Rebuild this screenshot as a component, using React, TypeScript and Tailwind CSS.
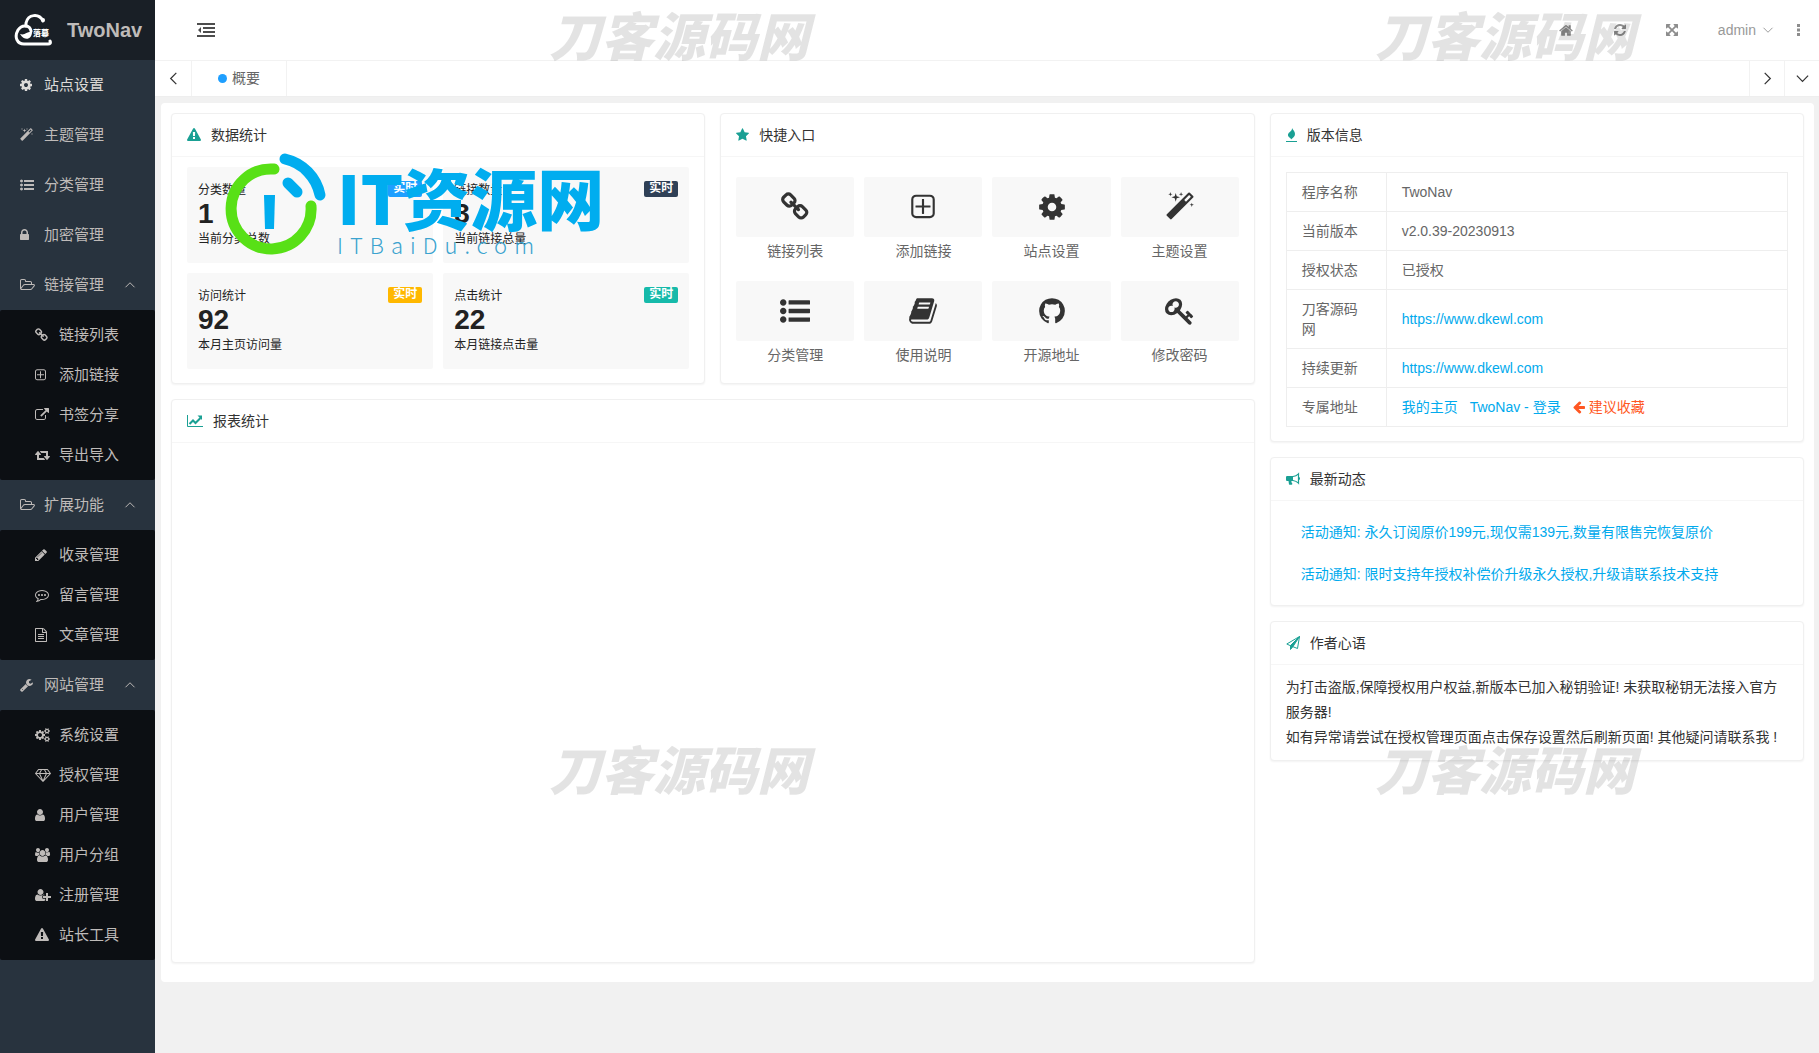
import React from "react";

type Glyph = { d: string; x: number; w: number };

const G: Record<string, Glyph> = {
  cog: { x: 128, w: 1536, d: "M1152 896q0-106-75-181t-181-75-181 75-75 181 75 181 181 75 181-75 75-181zm512-109v222q0 12-8 23t-20 13l-185 28q-19 54-39 91 35 50 107 138 10 12 10 25t-9 23q-27 37-99 108t-94 71q-12 0-26-9l-138-108q-44 23-91 38-16 136-29 186-7 28-36 28h-222q-14 0-24.5-8.5t-11.5-21.5l-28-184q-49-16-90-37l-141 107q-10 9-25 9-14 0-25-11-126-114-165-168-7-10-7-23 0-12 8-23 15-21 51-66.5t54-70.5q-27-50-41-99l-183-27q-13-2-21-12.5t-8-23.5v-222q0-12 8-23t19-13l186-28q14-46 39-92-40-57-107-138-10-12-10-24 0-10 9-23 26-36 98.5-107.5t94.5-71.5q13 0 26 10l138 107q44-23 91-38 16-136 29-186 7-28 36-28h222q14 0 24.5 8.5t11.5 21.5l28 184q49 16 90 37l142-107q9-9 24-9 13 0 25 10 129 119 165 170 7 8 7 22 0 12-8 23-15 21-51 66.5t-54 70.5q26 50 41 98l183 28q13 2 21 12.5t8 23.5z" },
  magic: { x: 64, w: 1664, d: "M1254 581l293-293-107-107-293 293zm447-293q0 27-18 45l-1286 1286q-18 18-45 18t-45-18l-198-198q-18-18-18-45t18-45l1286-1286q18-18 45-18t45 18l198 198q18 18 18 45zm-1351-190l98 30-98 30-30 98-30-98-98-30 98-30 30-98zm350 162l196 60-196 60-60 196-60-196-196-60 196-60 60-196zm930 478l98 30-98 30-30 98-30-98-98-30 98-30 30-98zm-640-640l98 30-98 30-30 98-30-98-98-30 98-30 30-98z" },
  list: { x: 0, w: 1792, d: "M384 1408q0 80-56 136t-136 56-136-56-56-136 56-136 136-56 136 56 56 136zm0-512q0 80-56 136t-136 56-136-56-56-136 56-136 136-56 136 56 56 136zm1408 416v192q0 13-9.5 22.5t-22.5 9.5h-1216q-13 0-22.5-9.5t-9.5-22.5v-192q0-13 9.5-22.5t22.5-9.5h1216q13 0 22.5 9.5t9.5 22.5zm-1408-928q0 80-56 136t-136 56-136-56-56-136 56-136 136-56 136 56 56 136zm1408 416v192q0 13-9.5 22.5t-22.5 9.5h-1216q-13 0-22.5-9.5t-9.5-22.5v-192q0-13 9.5-22.5t22.5-9.5h1216q13 0 22.5 9.5t9.5 22.5zm0-512v192q0 13-9.5 22.5t-22.5 9.5h-1216q-13 0-22.5-9.5t-9.5-22.5v-192q0-13 9.5-22.5t22.5-9.5h1216q13 0 22.5 9.5t9.5 22.5z" },
  lock: { x: 320, w: 1152, d: "M640 768h512v-192q0-106-75-181t-181-75-181 75-75 181v192zm832 96v576q0 40-28 68t-68 28h-960q-40 0-68-28t-28-68v-576q0-40 28-68t68-28h32v-192q0-184 132-316t316-132 316 132 132 316v192h32q40 0 68 28t28 68z" },
  folder: { x: -64, w: 1920, d: "M1717 931q0-35-53-35h-1088q-40 0-85.5 21.5t-71.5 52.5l-294 363q-18 24-18 40 0 35 53 35h1088q40 0 86-22t71-53l294-363q18-22 18-39zm-1141-163h768v-160q0-40-28-68t-68-28h-576q-40 0-68-28t-28-68v-64q0-40-28-68t-68-28h-320q-40 0-68 28t-28 68v853l256-315q44-53 116-87.5t140-34.5zm1269 163q0 62-46 120l-295 363q-43 53-116 87.5t-140 34.5h-1088q-92 0-158-66t-66-158v-960q0-92 66-158t158-66h320q92 0 158 66t66 158v32h544q92 0 158 66t66 158v160h192q54 0 99 24.5t67 70.5q15 32 15 68z" },
  chain: { x: 80, w: 1664, d: "M1520 1216q0-40-28-68l-208-208q-28-28-68-28-42 0-72 32 3 3 19 18.5t21.5 21.5 15 19 13 25.5 3.5 27.5q0 40-28 68t-68 28q-15 0-27.5-3.5t-25.5-13-19-15-21.5-21.5-18.5-19q-33 31-33 73 0 40 28 68l206 207q27 27 68 27 40 0 68-26l147-146q28-28 28-67zm-703-705q0-40-28-68l-206-207q-28-28-68-28-39 0-68 27l-147 146q-28 28-28 67 0 40 28 68l208 208q27 27 68 27 42 0 72-31-3-3-19-18.5t-21.5-21.5-15-19-13-25.5-3.5-27.5q0-40 28-68t68-28q15 0 27.5 3.5t25.5 13 19 15 21.5 21.5 18.5 19q33-31 33-73zm895 705q0 120-85 203l-147 146q-83 83-203 83-121 0-204-85l-206-207q-83-83-83-203 0-123 88-209l-88-88q-86 88-208 88-120 0-204-84l-208-208q-84-84-84-204t85-203l147-146q83-83 203-83 121 0 204 85l206 207q83 83 83 203 0 123-88 209l88 88q86-88 208-88 120 0 204 84l208 208q84 84 84 204z" },
  plus: { x: 192, w: 1408, d: "M1344 832v64q0 14-9 23t-23 9h-352v352q0 14-9 23t-23 9h-64q-14 0-23-9t-9-23v-352h-352q-14 0-23-9t-9-23v-64q0-14 9-23t23-9h352v-352q0-14 9-23t23-9h64q14 0 23 9t9 23v352h352q14 0 23 9t9 23zm128 448v-832q0-66-47-113t-113-47h-832q-66 0-113 47t-47 113v832q0 66 47 113t113 47h832q66 0 113-47t47-113zm128-832v832q0 119-84.5 203.5t-203.5 84.5h-832q-119 0-203.5-84.5t-84.5-203.5v-832q0-119 84.5-203.5t203.5-84.5h832q119 0 203.5 84.5t84.5 203.5z" },
  share: { x: 0, w: 1792, d: "M1408 928v320q0 119-84.5 203.5t-203.5 84.5h-832q-119 0-203.5-84.5t-84.5-203.5v-832q0-119 84.5-203.5t203.5-84.5h704q14 0 23 9t9 23v64q0 14-9 23t-23 9h-704q-66 0-113 47t-47 113v832q0 66 47 113t113 47h832q66 0 113-47t47-113v-320q0-14 9-23t23-9h64q14 0 23 9t9 23zm384-864v512q0 26-19 45t-45 19-45-19l-176-176-652 652q-10 10-23 10t-23-10l-114-114q-10-10-10-23t10-23l652-652-176-176q-19-19-19-45t19-45 45-19h512q26 0 45 19t19 45z" },
  retweet: { x: 0, w: 1920, d: "M1280 1504q0 13-9.5 22.5t-22.5 9.5h-960q-8 0-13.5-2t-9-7-5.5-8-3-11.5-1-11.5v-600h-192q-26 0-45-19t-19-45q0-24 15-41l320-384q19-22 49-22t49 22l320 384q15 17 15 41 0 26-19 45t-45 19h-192v384h576q16 0 25 11l160 192q7 10 7 21zm640-416q0 24-15 41l-320 384q-20 23-49 23t-49-23l-320-384q-15-17-15-41 0-26 19-45t45-19h192v-384h-576q-16 0-25-12l-160-192q-7-9-7-20 0-13 9.5-22.5t22.5-9.5h960q8 0 13.5 2t9 7 5.5 8 3 11.5 1 11.5v600h192q26 0 45 19t19 45z" },
  pencil: { x: 128, w: 1536, d: "M491 1536l91-91-235-235-91 91v107h128v128h107zm523-928q0-22-22-22-10 0-17 7l-542 542q-7 7-7 17 0 22 22 22 10 0 17-7l542-542q7-7 7-17zm-54-192l416 416-832 832h-416v-416zm683 96q0 53-37 90l-166 166-416-416 166-165q36-38 90-38 53 0 91 38l235 234q37 39 37 91z" },
  comment: { x: 0, w: 1792, d: "M640 896q0 53-37.5 90.5t-90.5 37.5-90.5-37.5-37.5-90.5 37.5-90.5 90.5-37.5 90.5 37.5 37.5 90.5zm384 0q0 53-37.5 90.5t-90.5 37.5-90.5-37.5-37.5-90.5 37.5-90.5 90.5-37.5 90.5 37.5 37.5 90.5zm384 0q0 53-37.5 90.5t-90.5 37.5-90.5-37.5-37.5-90.5 37.5-90.5 90.5-37.5 90.5 37.5 37.5 90.5zm-512-512q-204 0-381.5 69.5t-282 187.5-104.5 255q0 112 71.5 213.5t201.5 175.5l87 50-27 96q-24 91-70 172 152-63 275-171l43-38 57 6q69 8 130 8 204 0 381.5-69.5t282-187.5 104.5-255-104.5-255-282-187.5-381.5-69.5zm896 512q0 174-120 321.5t-326 233-450 85.5q-70 0-145-8-198 175-460 242-49 14-114 22h-5q-15 0-27-10.5t-16-27.5v-1q-3-4-.5-12t2-10 4.5-9.5l6-9 7-8.5 8-9q7-8 31-34.5t34.5-38 31-39.5 32.5-51 27-59 26-76q-157-89-247.5-220t-90.5-281q0-174 120-321.5t326-233 450-85.5 450 85.5 326 233 120 321.5z" },
  file: { x: 128, w: 1536, d: "M1596 380q28 28 48 76t20 88v1152q0 40-28 68t-68 28h-1344q-40 0-68-28t-28-68v-1600q0-40 28-68t68-28h896q40 0 88 20t76 48zm-444-244v376h376q-10-29-22-41l-313-313q-12-12-41-22zm384 1528v-1024h-416q-40 0-68-28t-28-68v-416h-768v1536h1280zm-1024-864q0-14 9-23t23-9h704q14 0 23 9t9 23v64q0 14-9 23t-23 9h-704q-14 0-23-9t-9-23v-64zm736 224q14 0 23 9t9 23v64q0 14-9 23t-23 9h-704q-14 0-23-9t-9-23v-64q0-14 9-23t23-9h704zm0 256q14 0 23 9t9 23v64q0 14-9 23t-23 9h-704q-14 0-23-9t-9-23v-64q0-14 9-23t23-9h704z" },
  wrench: { x: 64, w: 1664, d: "M448 1472q0-26-19-45t-45-19-45 19-19 45 19 45 45 19 45-19 19-45zm644-420l-682 682q-37 37-90 37-52 0-91-37l-106-108q-38-36-38-90 0-53 38-91l681-681q39 98 114.5 173.5t173.5 114.5zm634-435q0 39-23 106-47 134-164.5 217.5t-258.5 83.5q-185 0-316.5-131.5t-131.5-316.5 131.5-316.5 316.5-131.5q58 0 121.5 16.5t107.5 46.5q16 11 16 28t-16 28l-293 169v224l193 107q5-3 79-48.5t135.5-81 70.5-35.5q15 0 23.5 10t8.5 25z" },
  cogs: { x: 0, w: 1920, d: "M896 896q0-106-75-181t-181-75-181 75-75 181 75 181 181 75 181-75 75-181zm768 512q0-52-38-90t-90-38-90 38-38 90q0 53 37.500 90.500t90.500 37.500 90.500-37.500 37.500-90.500zm0-1024q0-52-38-90t-90-38-90 38-38 90q0 53 37.500 90.500t90.500 37.500 90.500-37.500 37.500-90.500zm-384 421v185q0 10-7 19.500t-16 10.500l-155 24q-11 35-32 76 34 48 90 115 7 11 7 20 0 12-7 19-23 30-82.500 89.500t-78.500 59.500q-11 0-21-7l-115-90q-37 19-77 31-11 108-23 155-7 24-30 24h-186q-11 0-20-7.500t-10-17.500l-23-153q-34-10-75-31l-118 89q-7 7-20 7-11 0-21-8-144-133-144-160 0-9 7-19 10-14 41-53t47-61q-23-44-35-82l-152-24q-10-1-17-9.500t-7-19.500v-185q0-10 7-19.500t16-10.500l155-24q11-35 32-76-34-48-90-115-7-11-7-20 0-12 7-20 22-30 82-89t79-59q11 0 21 7l115 90q34-18 77-32 11-108 23-154 7-24 30-24h186q11 0 20 7.500t10 17.500l23 153q34 10 75 31l118-89q8-7 20-7 11 0 21 8 144 133 144 160 0 8-7 19-12 16-42 54t-45 60q23 48 34 82l152 23q10 2 17 10.500t7 19.500zm640 533v140q0 16-149 31-12 27-30 52 51 113 51 138 0 4-4 7-122 71-124 71-8 0-46-47t-52-68q-20 2-30 2t-30-2q-14 21-52 68t-46 47q-2 0-124-71-4-3-4-7 0-25 51-138-18-25-30-52-149-15-149-31v-140q0-16 149-31 13-29 30-52-51-113-51-138 0-4 4-7 4-2 35-20t59-34 30-16q8 0 46 46.500t52 67.500q20-2 30-2t30 2q51-71 92-112l6-2q4 0 124 70 4 3 4 7 0 25-51 138 17 23 30 52 149 15 149 31zm0-1024v140q0 16-149 31-12 27-30 52 51 113 51 138 0 4-4 7-122 71-124 71-8 0-46-47t-52-68q-20 2-30 2t-30-2q-14 21-52 68t-46 47q-2 0-124-71-4-3-4-7 0-25 51-138-18-25-30-52-149-15-149-31v-140q0-16 149-31 13-29 30-52-51-113-51-138 0-4 4-7 4-2 35-20t59-34 30-16q8 0 46 46.500t52 67.500q20-2 30-2t30 2q51-71 92-112l6-2q4 0 124 70 4 3 4 7 0 25-51 138 17 23 30 52 149 15 149 31z" },
  diamond: { x: 0, w: 2048, d: "M212 768l623 665-300-665h-323zm812 772l349-772h-698zm-486-900l204-384h-262l-288 384h346zm675 793l623-665h-323zm-530-793h682l-204-384h-274zm827 0h346l-288-384h-262zm141-486l384 512q14 18 13 41.500t-17 40.500l-960 1024q-18 20-47 20t-47-20l-960-1024q-16-17-17-40.500t13-41.500l384-512q18-26 51-26h1152q33 0 51 26z" },
  user: { x: 256, w: 1280, d: "M1536 1399q0 109-62.500 187t-150.500 78h-854q-88 0-150.500-78t-62.500-187q0-85 8.500-160.500t31.500-152 58.500-131 94-89 134.500-34.500q131 128 313 128t313-128q76 0 134.500 34.500t94 89 58.500 131 31.500 152 8.500 160.500zm-256-887q0 159-112.500 271.500t-271.500 112.500-271.500-112.500-112.500-271.500 112.500-271.500 271.500-112.500 271.500 112.500 112.500 271.500z" },
  users: { x: 64, w: 1920, d: "M657 896q-162 5-265 128h-134q-82 0-138-40.500t-56-118.500q0-353 124-353 6 0 43.500 21t97.500 42.500 119 21.500q67 0 133-23-5 37-5 66 0 159 93 294zm1071 637q0 120-73 189.500t-194 69.500h-874q-121 0-194-69.500t-73-189.500q0-53 3.500-103.500t14-109 26.500-108.500 43-97.500 62-81 85.500-53.500 111.500-20q10 0 43 21.500t73 48 107 48 135 21.500 135-21.500 107-48 73-48 43-21.500q61 0 111.500 20t85.500 53.500 62 81 43 97.500 26.500 108.500 14 109 3.500 103.500zm-1024-1277q0 106-75 181t-181 75-181-75-75-181 75-181 181-75 181 75 75 181zm704 384q0 159-112.500 271.500t-271.500 112.500-271.500-112.500-112.500-271.500 112.500-271.500 271.500-112.500 271.500 112.500 112.500 271.500zm576 225q0 78-56 118.500t-138 40.500h-134q-103-123-265-128 93-135 93-294 0-29-5-66 66 23 133 23 59 0 119-21.500t97.500-42.500 43.500-21q124 0 124 353zm-128-609q0 106-75 181t-181 75-181-75-75-181 75-181 181-75 181 75 75 181z" },
  userPlus: { x: 0, w: 2048, d: "M704 896q-159 0-271.500-112.500t-112.500-271.500 112.500-271.500 271.500-112.500 271.500 112.500 112.500 271.500-112.500 271.500-271.500 112.500zm960 128h352q13 0 22.500 9.500t9.500 22.500v192q0 13-9.500 22.500t-22.500 9.500h-352v352q0 13-9.500 22.500t-22.500 9.500h-192q-13 0-22.500-9.500t-9.500-22.500v-352h-352q-13 0-22.500-9.500t-9.500-22.500v-192q0-13 9.500-22.500t22.500-9.500h352v-352q0-13 9.500-22.500t22.500-9.500h192q13 0 22.500 9.500t9.500 22.500v352zm-736 224q0 52 38 90t90 38h256v238q-68 50-171 50h-874q-121 0-194-69t-73-190q0-53 3.500-103.500t14-109 26.500-108.500 43-97.500 62-81 85.500-53.500 111.500-20q19 0 39 17 79 61 154.500 91.500t164.500 30.500 164.500-30.500 154.500-91.500q20-17 39-17 132 0 217 96h-223q-52 0-90 38t-38 90v192z" },
  warning: { x: 0, w: 1792, d: "M1024 1375v-190q0-14-9.500-23.500t-22.500-9.500h-192q-13 0-22.500 9.500t-9.500 23.500v190q0 14 9.500 23.500t22.500 9.500h192q13 0 22.500-9.500t9.500-23.500zm-2-374l18-459q0-12-10-19-13-11-24-11h-220q-11 0-24 11-10 7-10 21l17 457q0 10 10 16.500t24 6.500h185q14 0 23.500-6.500t10.500-16.500zm-14-934l768 1408q35 63-2 126-17 29-46.500 46t-63.500 17h-1536q-34 0-63.500-17t-46.500-46q-37-63-2-126l768-1408q17-31 47-49t65-18 65 18 47 49z" },
  star: { x: 64, w: 1664, d: "M1728 647q0 22-26 48l-363 354 86 500q1 7 1 20 0 21-10.500 35.500t-30.500 14.500q-19 0-40-12l-449-236-449 236q-22 12-40 12-21 0-31.500-14.500t-10.500-35.500q0-6 2-20l86-500-364-354q-25-27-25-48 0-37 56-46l502-73 225-455q19-41 49-41t49 41l225 455 502 73q56 9 56 46z" },
  book: { x: 64, w: 1664, d: "M1703 478q40 57 18 129l-275 906q-19 64-76.500 107.500t-122.500 43.500h-923q-77 0-148.500-53.500t-99.500-131.500q-24-67-2-127 0-4 3-27t4-37q1-8-3-21.500t-3-19.500q2-11 8-21t16.500-23.500 16.500-23.500q23-38 45-91.500t30-91.500q3-10 .5-30t-.5-28q3-11 17-28t17-23q21-36 42-92t25-90q1-9-2.500-32t.5-28q4-13 22-30.500t22-22.500q19-26 42.500-84.500t27.500-96.500q1-8-3-25.500t-2-26.500q2-8 9-18t18-23 17-21q8-12 16.500-30.500t15-35 16-36 19.500-32 26.500-23.500 36-11.500 47.500 5.500l-1 3q38-9 51-9h761q74 0 114 56t18 130l-274 906q-36 119-71.500 153.500t-128.500 34.500h-869q-27 0-38 15-11 16-1 43 24 70 144 70h923q29 0 56-15.500t35-41.500l300-987q7-22 5-57 38 15 59 43zm-1064 2q-4 13 2 22.500t20 9.500h608q13 0 25.500-9.500t16.500-22.500l21-64q4-13-2-22.500t-20-9.500h-608q-13 0-25.500 9.500t-16.500 22.500zm-83 256q-4 13 2 22.500t20 9.500h608q13 0 25.500-9.500t16.500-22.500l21-64q4-13-2-22.500t-20-9.500h-608q-13 0-25.500 9.500t-16.500 22.500z" },
  github: { x: 128, w: 1536, d: "M896 128q209 0 385.500 103t279.500 279.500 103 385.500q0 251-146.500 451.500t-378.500 277.500q-27 5-40-7t-13-30q0-3 .5-76.500t.5-134.500q0-97-52-142 57-6 102.500-18t94-39 81-66.500 53-105 20.500-150.500q0-119-79-206 37-91-8-204-28-9-81 11t-92 44l-38 24q-93-26-192-26t-192 26q-16-11-42.500-27t-83.500-38.500-85-13.500q-45 113-8 204-79 87-79 206 0 85 20.500 150t52.500 105 80.500 67 94 39 102.500 18q-39 36-49 103-21 10-45 15t-57 5-65.500-21.500-55.500-62.500q-19-32-48.500-52t-49.500-24l-20-3q-21 0-29 4.500t-5 11.500 9 14 13 12l7 5q22 10 43.500 38t31.500 51l10 23q13 38 44 61.500t67 30 69.500 7 55.500-3.500l23-4q0 38 .5 88.500t.5 54.500q0 18-13 30t-40 7q-232-77-378.500-277.500t-146.500-451.500q0-209 103-385.500t279.500-279.500 385.500-103z" },
  key: { x: 64, w: 1664, d: "M832 512q0-80-56-136t-136-56-136 56-56 136q0 42 19 83-41-19-83-19-80 0-136 56t-56 136 56 136 136 56 136-56 56-136q0-42-19-83 41 19 83 19 80 0 136-56t56-136zm851 704q0 17-49 66t-66 49q-9 0-28.500-16t-36.500-33-38.500-40-24.500-26l-96 96 220 220q28 28 28 68 0 42-39 81t-81 39q-40 0-68-28l-671-671q-176 131-365 131-163 0-265.500-102.500t-102.500-265.500q0-160 95-313t248-248 313-95q163 0 265.500 102.500t102.500 265.500q0 189-131 365l355 355 96-96q-3-3-26-24.500t-40-38.500-33-36.500-16-28.500q0-17 49-66t66-49q13 0 23 10 6 6 46 44.500t82 79.500 86.500 86 73 78 28.500 41z" },
  arrowLeft: { x: 128, w: 1536, d: "M1664 896v128q0 53-32.500 90.500t-84.500 37.500h-704l293 294q38 36 38 90t-38 90l-75 76q-37 37-90 37-52 0-91-37l-651-652q-37-37-37-90 0-52 37-91l651-650q38-38 91-38 52 0 90 38l75 74q38 38 38 91t-38 91l-293 293h704q52 0 84.500 37.500t32.500 90.500z" },
  home: { x: 64, w: 1664, d: "M1472 992v480q0 26-19 45t-45 19h-384v-384h-256v384h-384q-26 0-45-19t-19-45v-480q0-1 .5-3t.5-3l575-474 575 474q1 2 1 6zm223-69l-62 74q-8 9-21 11h-3q-13 0-21-7l-692-577-692 577q-12 8-24 7-13-2-21-11l-62-74q-8-10-7-23.500t11-21.500l719-599q32-26 76-26t76 26l244 204v-195q0-14 9-23t23-9h192q14 0 23 9t9 23v408l219 182q10 8 11 21.500t-7 23.500z" },
  refresh: { x: 128, w: 1536, d: "M1639 1056q0 5-1 7-64 268-268 434.500t-478 166.500q-146 0-282.500-55t-243.500-157l-129 129q-19 19-45 19t-45-19-19-45v-448q0-26 19-45t45-19h448q26 0 45 19t19 45-19 45l-137 137q71 66 161 102t187 36q134 0 250-65t186-179q11-17 53-117 8-23 30-23h192q13 0 22.500 9.500t9.500 22.500zm25-800v448q0 26-19 45t-45 19h-448q-26 0-45-19t-19-45 19-45l138-138q-148-137-349-137-134 0-250 65t-186 179q-11 17-53 117-8 23-30 23h-199q-13 0-22.500-9.500t-9.500-22.500v-7q65-268 270-434.500t480-166.500q146 0 284 55.500t245 156.500l130-129q19-19 45-19t45 19 19 45z" },
  expand: { x: 128, w: 1536, d: "M1411 541l-355 355 355 355 144-144q29-31 70-14 39 17 39 59v448q0 26-19 45t-45 19h-448q-42 0-59-40-17-39 14-69l144-144-355-355-355 355 144 144q31 30 14 69-17 40-59 40h-448q-26 0-45-19t-19-45v-448q0-42 40-59 39-17 69 14l144 144 355-355-355-355-144 144q-19 19-45 19-12 0-24-5-40-17-40-59v-448q0-26 19-45t45-19h448q42 0 59 40 17 39-14 69l-144 144 355 355 355-355-144-144q-31-30-14-69 17-40 59-40h448q26 0 45 19t19 45v448q0 42-39 59-13 5-25 5-26 0-45-19z" },
};

function Icon({ name, className, center }: { name: string; className: string; center?: boolean }) {
  const g = G[name];
  return (
    <svg
      aria-hidden="true"
      className={className}
      viewBox={`${g.x} 0 ${g.w} 1792`}
      preserveAspectRatio={center ? "xMidYMid meet" : "xMinYMid meet"}
      fill="currentColor"
      overflow="visible"
    >
      <path d={g.d} />
    </svg>
  );
}

function Chevron({ dir, className }: { dir: "up" | "down" | "left" | "right"; className: string }) {
  const d = { up: "M2 11l6-6 6 6", down: "M2 5l6 6 6-6", left: "M11 2L5 8l6 6", right: "M5 2l6 6-6 6" }[dir];
  return (
    <svg aria-hidden="true" viewBox="0 0 16 16" className={className} fill="none" stroke="currentColor" strokeWidth="1.300">
      <path d={d} />
    </svg>
  );
}

function CloudLogo() {
  return (
    <svg aria-hidden="true" viewBox="0 0 40 34" className="h-[34px] w-[40px] shrink-0">
      <g fill="none" stroke="#fff" strokeWidth="3" strokeLinecap="round" strokeLinejoin="round">
        <path d="M29 8C25 0 14 1 12 10C12 11 12 12 12 13" />
        <path d="M17 18C16 12 8 11 4 17C0 24 3 31 10 31H34C36 31 37 30 36 28" />
      </g>
      <circle cx="29" cy="7" r="2" fill="#fff" />
      <path d="M6 21C11 23 13 18 18 19C18 26 11 29 6 21Z" fill="#fff" />
      <text x="19" y="23" fontSize="8" fontWeight="900" fill="#fff" fontFamily="'Noto Sans CJK SC', sans-serif">落幕</text>
    </svg>
  );
}

type Item = { icon: string; label: string; children?: Item[] };

const menu: Item[] = [
  { icon: "cog", label: "站点设置" },
  { icon: "magic", label: "主题管理" },
  { icon: "list", label: "分类管理" },
  { icon: "lock", label: "加密管理" },
  {
    icon: "folder", label: "链接管理", children: [
      { icon: "chain", label: "链接列表" },
      { icon: "plus", label: "添加链接" },
      { icon: "share", label: "书签分享" },
      { icon: "retweet", label: "导出导入" },
    ],
  },
  {
    icon: "folder", label: "扩展功能", children: [
      { icon: "pencil", label: "收录管理" },
      { icon: "comment", label: "留言管理" },
      { icon: "file", label: "文章管理" },
    ],
  },
  {
    icon: "wrench", label: "网站管理", children: [
      { icon: "cogs", label: "系统设置" },
      { icon: "diamond", label: "授权管理" },
      { icon: "user", label: "用户管理" },
      { icon: "users", label: "用户分组" },
      { icon: "userPlus", label: "注册管理" },
      { icon: "warning", label: "站长工具" },
    ],
  },
];

function Sidebar() {
  return (
    <aside className="w-[155px] shrink-0 bg-[#28333e] text-[15px] text-[#bfbbb9]">
      <a href="#" className="flex h-[60px] items-center bg-[#191f26] pl-[14px]">
        <CloudLogo />
        <span className="ml-[13px] text-[20px] font-bold">TwoNav</span>
      </a>
      <nav>
        <ul>
          {menu.map((m, i) => (
            <li key={m.label}>
              <a href="#" className={i === 0 ? "flex h-[50px] items-center pl-5 text-[#dcdad8]" : "flex h-[50px] items-center pl-5"}>
                <Icon name={m.icon} className="mr-[6px] h-[14px] w-[18px]" />
                <span>{m.label}</span>
                {m.children && <Chevron dir="up" className="ml-5 h-3 w-3" />}
              </a>
              {m.children && (
                <ul className="rounded-xs bg-[#0c0f13] py-[5px]">
                  {m.children.map((c) => (
                    <li key={c.label}>
                      <a href="#" className="flex h-10 items-center pl-[35px]">
                        <Icon name={c.icon} className="mr-[6px] h-[14px] w-[18px]" />
                        <span>{c.label}</span>
                      </a>
                    </li>
                  ))}
                </ul>
              )}
            </li>
          ))}
        </ul>
      </nav>
    </aside>
  );
}

function Header() {
  return (
    <header className="flex h-[61px] items-center border-b border-[#f2f2f2] bg-white text-[#8d8d8d]">
      <button type="button" aria-label="收起菜单" className="ml-[42px] text-[#4d4d4d]">
        <svg viewBox="0 0 18 14" className="h-[14px] w-[18px]" fill="currentColor" aria-hidden="true">
          <path d="M0 0H18V2H0zM6 4H18V6H6zM6 8H18V10H6zM0 12H18V14H0zM4 4V10L1 7z" />
        </svg>
      </button>
      <div className="ml-auto flex items-center">
        <button type="button" aria-label="主页" className="mr-[41px]"><Icon name="home" center className="h-[15px] w-[14px]" /></button>
        <button type="button" aria-label="刷新" className="mr-[40px]"><Icon name="refresh" center className="h-[14px] w-[12px]" /></button>
        <button type="button" aria-label="全屏" className="mr-[40px]"><Icon name="expand" center className="h-[14px] w-[12px]" /></button>
        <button type="button" className="flex items-center text-[14px] text-[#999]">
          admin
          <Chevron dir="down" className="ml-[6px] h-3 w-3" />
        </button>
        <button type="button" aria-label="更多" className="mr-[19px] ml-[23px]">
          <svg viewBox="0 0 3 12" className="h-[12px] w-[3px]" fill="currentColor" aria-hidden="true">
            <path d="M0 0h3v3H0zM0 4.500h3v3H0zM0 9h3v3H0z" />
          </svg>
        </button>
      </div>
    </header>
  );
}

function TabBar() {
  return (
    <div className="flex h-9 items-stretch border-b border-[#eee] bg-white text-[#333]">
      <button type="button" aria-label="向左" className="flex w-[37px] items-center justify-center border-r border-[#f2f2f2]">
        <Chevron dir="left" className="h-[15px] w-[15px]" />
      </button>
      <button type="button" className="flex w-[95px] items-center justify-center gap-[5px] border-r border-[#f2f2f2] text-[14px] text-[#666]">
        <span className="h-[9px] w-[9px] rounded-full bg-[#1e9fff]" />
        概要
      </button>
      <button type="button" aria-label="向右" className="ml-auto flex w-[35px] items-center justify-center border-l border-[#f2f2f2]">
        <Chevron dir="right" className="h-[15px] w-[15px]" />
      </button>
      <button type="button" aria-label="标签操作" className="flex w-[35px] items-center justify-center border-l border-[#f2f2f2]">
        <Chevron dir="down" className="h-[15px] w-[15px]" />
      </button>
    </div>
  );
}

function Card({ icon, title, children, className = "" }: { icon: React.ReactNode; title: string; children?: React.ReactNode; className?: string }) {
  return (
    <section className={`rounded-[4px] border border-[#f0f0f0] bg-white shadow-[0_1px_2px_rgba(0,0,0,0.05)] ${className}`}>
      <h2 className="flex h-[43px] items-center gap-[10px] border-b border-[#f6f6f6] px-[15px] text-[14px] text-[#333]">
        <span className="text-[#1aa094]">{icon}</span>
        {title}
      </h2>
      {children}
    </section>
  );
}

const stats = [
  { label: "分类数量", value: "1", note: "当前分类总数", badge: "bg-[#1e9fff]" },
  { label: "链接数量", value: "3", note: "当前链接总量", badge: "bg-[#2f4056]" },
  { label: "访问统计", value: "92", note: "本月主页访问量", badge: "bg-[#ffb800]" },
  { label: "点击统计", value: "22", note: "本月链接点击量", badge: "bg-[#16baaa]" },
];

const shortcuts = [
  { icon: "chain", label: "链接列表" },
  { icon: "plus", label: "添加链接" },
  { icon: "cog", label: "站点设置" },
  { icon: "magic", label: "主题设置" },
  { icon: "list", label: "分类管理" },
  { icon: "book", label: "使用说明" },
  { icon: "github", label: "开源地址" },
  { icon: "key", label: "修改密码" },
];

function SiteLogo() {
  return (
    <div className="pointer-events-none absolute top-[36px] left-[49px] flex whitespace-nowrap">
      <svg viewBox="0 0 108 108" className="h-[108px] w-[108px] shrink-0" fill="none" strokeLinecap="round" strokeWidth="11" aria-hidden="true">
        <path d="M53 19A40 40 0 1 0 90 56" stroke="#58e016" />
        <path d="M64 9A46 46 0 0 1 99 45" stroke="#00adef" />
        <path d="M67 33L76 42" stroke="#00adef" />
        <path d="M43 45H54L53 79H44Z" fill="#00adef" />
      </svg>
      <div className="ml-2 flex flex-col pt-[14px] font-['Noto_Sans_CJK_SC',sans-serif]">
        <span className="text-[67px] leading-[64px] font-black text-[#00adef]">IT资源网</span>
        <span className="text-[22px] leading-[32px] font-light tracking-[7px] text-[#3ba3cf]">ITBaiDu.com</span>
      </div>
    </div>
  );
}

function Watermark({ className }: { className: string }) {
  return (
    <span className={`pointer-events-none absolute z-10 font-['Noto_Sans_CJK_SC',sans-serif] text-[52px] leading-[72px] font-black whitespace-nowrap text-black/11 italic ${className}`}>
      刀客源码网
    </span>
  );
}

const link = "text-[#01aaed]";

const info: [string, React.ReactNode][] = [
  ["程序名称", "TwoNav"],
  ["当前版本", "v2.0.39-20230913"],
  ["授权状态", "已授权"],
  ["刀客源码网", <a href="#" className={link}>https://www.dkewl.com</a>],
  ["持续更新", <a href="#" className={link}>https://www.dkewl.com</a>],
  ["专属地址", (
    <div className="flex items-center">
      <a href="#" className={link}>我的主页</a>
      <a href="#" className="ml-3 text-[#01aaed]">TwoNav - 登录</a>
      <span className="ml-3 flex items-center gap-1 text-[#ff5722]">
        <Icon name="arrowLeft" className="h-[14px] w-3" />
        建议收藏
      </span>
    </div>
  )],
];

export default function App() {
  return (
    <div className="relative flex min-h-screen overflow-hidden bg-[#f1f1f1] font-['Liberation_Sans','Noto_Sans_CJK_SC',sans-serif]">
      <Sidebar />
      <div className="min-w-0 flex-1">
        <Header />
        <TabBar />
        <main className="mt-[6px] mr-[5px] ml-[6px] rounded-[4px] bg-white px-[10px] pt-[10px] pb-[19px]">
          <div className="grid grid-cols-3 items-start gap-[15px]">
            <div className="col-span-2 grid grid-cols-2 gap-[15px]">
              <Card icon={<Icon name="warning" className="h-[14px] w-[14px]" />} title="数据统计" className="relative">
                <div className="grid grid-cols-2 gap-[10px] px-[15px] pt-[10px] pb-[14px]">
                  {stats.map((s) => (
                    <div key={s.label} className="flex h-24 justify-between rounded-[2px] bg-[#f8f8f8] px-[11px] pt-[11px] text-[12px] leading-6 text-[#222]">
                      <div>
                        <div>{s.label}</div>
                        <div className="text-[28px] font-bold">{s.value}</div>
                        <div className="leading-[26px]">{s.note}</div>
                      </div>
                      <span className={`mt-[3px] h-4 rounded-[2px] px-[5px] leading-[14px] font-bold text-white ${s.badge}`}>实时</span>
                    </div>
                  ))}
                </div>
                <SiteLogo />
              </Card>

              <Card icon={<Icon name="star" className="h-[14px] w-[13px]" />} title="快捷入口">
                <div className="grid grid-cols-4 gap-x-[10px] gap-y-4 px-[15px] pt-5">
                  {shortcuts.map((s) => (
                    <a key={s.label} href="#" className="block text-center text-[14px] leading-7 text-[#666]">
                      <span className="flex h-[60px] items-center justify-center rounded-[2px] bg-[#f8f8f8] text-[#333]">
                        <Icon name={s.icon} center className="h-[30px] w-[30px]" />
                      </span>
                      {s.label}
                    </a>
                  ))}
                </div>
              </Card>

              <Card
                className="col-span-2"
                title="报表统计"
                icon={
                  <svg viewBox="0 0 16 14" className="h-[14px] w-4" fill="none" stroke="currentColor" aria-hidden="true">
                    <path d="M.5 1V12.500H16" />
                    <path d="M2.500 10L6 6.500L8.500 9L13.500 4" strokeWidth="2" />
                    <path d="M10.500 1.500H15V6Z" fill="currentColor" stroke="none" />
                  </svg>
                }
              >
                <div className="h-[519px]" />
              </Card>
            </div>

            <div className="flex flex-col gap-[15px]">
              <Card
                title="版本信息"
                icon={
                  <svg viewBox="0 0 11 14" className="h-[14px] w-[11px]" fill="currentColor" aria-hidden="true">
                    <path d="M6 0C7 2 9 3.500 9 6C9 8.500 7 9.500 5 11.500C5.500 10 1.500 9.500 2 6.500C2.500 4 6.500 3 6 0Z" />
                    <path d="M0 13h11v1H0z" />
                  </svg>
                }
              >
                <div className="px-[15px] pt-[15px] pb-[14px]">
                  <table className="w-full table-fixed border-collapse text-[14px] leading-5 text-[#666]">
                    <colgroup>
                      <col className="w-[100px]" />
                      <col />
                    </colgroup>
                    <tbody>
                      {info.map(([k, v]) => (
                        <tr key={k}>
                          <th scope="row" className="border border-[#eee] px-[15px] py-[9px] text-left font-normal">{k}</th>
                          <td className="border border-[#eee] px-[15px] py-[9px]">{v}</td>
                        </tr>
                      ))}
                    </tbody>
                  </table>
                </div>
              </Card>

              <Card
                title="最新动态"
                icon={
                  <svg viewBox="0 0 14 14" className="h-[14px] w-[14px]" fill="currentColor" aria-hidden="true">
                    <path d="M1 4H7V9H5.500C5 10 6 11 6.500 12C6 13 4 13 3 12.500L2.500 9H1C0 9 0 8 0 8V5C0 4 1 4 1 4Z" />
                    <path d="M7 4.500C9 4.300 11 3.300 12.500 1.800V11.200C11 9.700 9 8.700 7 8.500" fill="none" stroke="currentColor" strokeWidth="1.200" />
                    <path d="M13 5c1.300 0 1.300 3 0 3z" />
                  </svg>
                }
              >
                <ul className="px-[30px] py-[10px] text-[14px] leading-[42px]">
                  <li><a href="#" className={link}>活动通知: 永久订阅原价199元,现仅需139元,数量有限售完恢复原价</a></li>
                  <li><a href="#" className={link}>活动通知: 限时支持年授权补偿价升级永久授权,升级请联系技术支持</a></li>
                </ul>
              </Card>

              <Card
                title="作者心语"
                icon={
                  <svg viewBox="0 0 14 14" className="h-[14px] w-[14px]" fill="none" stroke="currentColor" strokeLinejoin="round" aria-hidden="true">
                    <path d="M13.500 .5L.8 8L4 9.500L11.500 12.500Z" />
                    <path d="M13.500 .5L4.500 9.500V13.500L7 10.500Z" fill="currentColor" />
                  </svg>
                }
              >
                <div className="px-[15px] py-[10px] text-[14px] leading-[25px] text-[#333]">
                  <p>为打击盗版,保障授权用户权益,新版本已加入秘钥验证! 未获取秘钥无法接入官方服务器!</p>
                  <p>如有异常请尝试在授权管理页面点击保存设置然后刷新页面! 其他疑问请联系我 !</p>
                </div>
              </Card>
            </div>
          </div>
        </main>
      </div>
      <Watermark className="top-[-2px] left-[549px]" />
      <Watermark className="top-[-2px] left-[1375px]" />
      <Watermark className="top-[732px] left-[549px]" />
      <Watermark className="top-[732px] left-[1375px]" />
    </div>
  );
}
